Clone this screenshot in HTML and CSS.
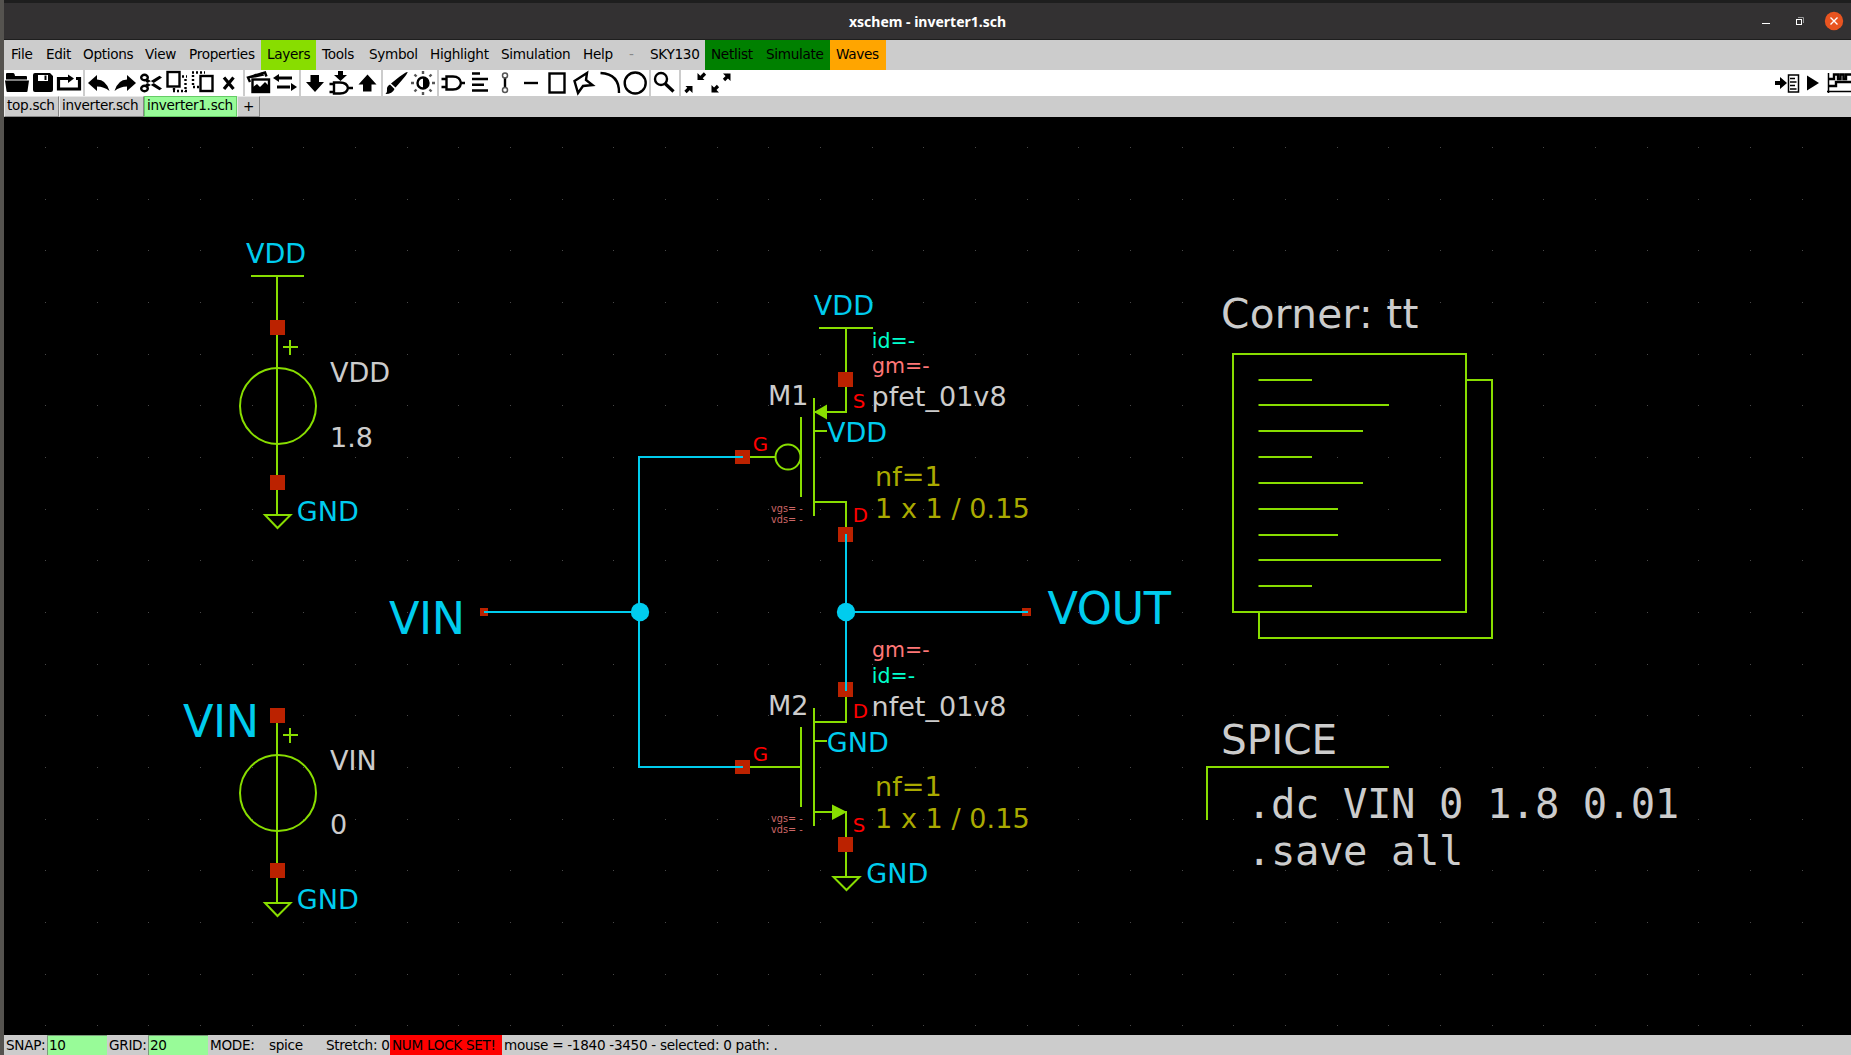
FILE: index.html
```html
<!DOCTYPE html>
<html lang="en">
<head>
<meta charset="utf-8">
<title>xschem - inverter1.sch</title>
<link rel="stylesheet" href="styles.css">
</head>
<body>
<div class="window">
  <header class="titlebar">
    <h1 class="title">xschem - inverter1.sch</h1>
    <svg class="controls" viewBox="1756 3 95 36" width="95" height="36">
      <path d="M1762 23.5h8" stroke="#fff"/>
      <path d="M1798 17.5h5.500v5.500" stroke="#999" fill="none"/>
      <rect x="1796.500" y="19.500" width="5" height="5" fill="none" stroke="#fff"/>
      <circle cx="1834" cy="21" r="9.200" fill="#e95420"/>
      <path d="M1830.500 17.500l7 7m0-7l-7 7" stroke="#fff" stroke-width="1.400"/>
    </svg>
  </header>

  <nav class="menubar">
    <span class="first">File</span><span>Edit</span><span>Options</span><span>View</span><span>Properties</span>
    <span class="layers">Layers</span><span>Tools</span><span>Symbol</span><span>Highlight</span>
    <span>Simulation</span><span>Help</span><span class="dim">-</span><span>SKY130</span>
    <span class="green">Netlist</span><span class="green">Simulate</span><span class="orange">Waves</span>
  </nav>

  <div class="toolbar">
    <div class="group">
      <svg viewBox="4 70 27 26" width="27" height="26"><path d="M6 74q0-1 1-1h6q1 0 1.500 1l.5 2h11q1 0 1 1v2.500H6z"/><path d="M5 80.500h24l-1.500 10.500q0 1-1 1H7.500q-1 0-1-1z"/></svg>
      <svg viewBox="31 70 25 26" width="25" height="26"><path fill-rule="evenodd" d="M35 73h15l3 3v14q0 2-2 2H35q-2 0-2-2V75q0-2 2-2zm3 2v6h10v-6z"/><path d="M44.500 75.500h2v4.500h-2z"/></svg>
      <svg viewBox="56 70 27 26" width="27" height="26"><path d="M66 78.500h-7.500v10.500h21V78.500H76M64 78.500h6" class="ln t3"/><path d="M68 74.500l6 4-6 4.500z"/></svg>
    </div>
    <div class="group">
      <svg viewBox="85 70 26 26" width="26" height="26"><path d="M88 83l9-8v4.500q9 0 12.500 11.500-5.500-4.500-12.500-4.500v4.500z"/></svg>
      <svg viewBox="111 70 27 26" width="27" height="26"><path d="M136 83l-9-8v4.500q-9 0-12.500 11.500 5.500-4.500 12.500-4.500v4.500z"/></svg>
      <svg viewBox="138 70 26 26" width="26" height="26"><g class="ln t2"><ellipse cx="144.500" cy="77.500" rx="3.300" ry="2.700"/><ellipse cx="144.500" cy="88.500" rx="3.300" ry="2.700"/></g><path d="M147 78.500l15 10-2.500 1.700-14-8.500zM147 87.500l15-10-2.500-1.700-14 8.500z"/></svg>
      <svg viewBox="164 70 26 26" width="26" height="26"><rect x="167.500" y="72" width="12" height="14.500" class="ln t2"/><path d="M182 76.500h5M185.500 79v13M173 91h14M174 88v3" class="ln t2 dots"/></svg>
      <svg viewBox="190 70 26 26" width="26" height="26"><rect x="200.500" y="76" width="12" height="15" class="ln t2"/><path d="M192 72.500h13M193 75v12M193 87h6" class="ln t2 dots"/></svg>
      <svg viewBox="216 70 27 26" width="27" height="26"><path d="M224 77.500l9.500 11.500m0-11.500l-9.500 11.500" class="ln t3"/></svg>
    </div>
    <div class="group">
      <svg viewBox="245 70 27 26" width="27" height="26"><rect x="252.500" y="79.500" width="16.500" height="12.500" class="ln t2"/><path d="M253 91v-4l4-3 3 3 5-5 4 4v5z"/><path d="M250 82l-2-4.500 17-5 1.500 4" class="ln t2"/><path d="M248 78l8-4.500 1.500 2 4-3 3 3-9 2z"/></svg>
      <svg viewBox="272 70 27 26" width="27" height="26"><path d="M278 78h14M277 87h13" class="ln t3"/><path d="M273 78l6-4v8zM297 87l-6-4v8z"/></svg>
    </div>
    <div class="group">
      <svg viewBox="301 70 26 26" width="26" height="26"><path d="M310.500 75h8.500v7h5l-9 10-9-10h4.500z"/></svg>
      <svg viewBox="327 70 28 26" width="28" height="26"><path d="M334 82.500h6q7 0 8 5.500-1 5.500-8 5.500h-6z M329.500 84h4.500M329.500 92h4.500M348 88h5" class="ln t2"/><path d="M338 71h5v4h4l-6.500 6-6.500-6h4z"/></svg>
      <svg viewBox="355 70 26 26" width="26" height="26"><path d="M363 91.500h8.500v-7h5l-9-10-9 10h4.500z"/></svg>
    </div>
    <div class="group">
      <svg viewBox="383 70 26 26" width="26" height="26"><path d="M407.500 72q1 1-12 15.500l-4.500-4Q406 71 407.500 72zM390 84.500l4.500 4.500q-2 5-9 5 2-1.500 1.500-4.500t3-5z"/></svg>
      <svg viewBox="409 70 28 26" width="28" height="26"><circle cx="423" cy="83" r="5.500" class="ln t2"/><path d="M423 77.500a5.500 5.500 0 0 1 0 11z"/><path d="M423 71v3m0 18v3M411 83h3m18 0h3M414.500 74.500l2 2m13 13l2 2m0-17l-2 2m-13 13l-2 2" class="ln t2 gray"/></svg>
    </div>
    <div class="group">
      <svg viewBox="439 70 28 26" width="28" height="26"><path d="M446.500 76.500h6.500q7 0 8 6.500-1 6.500-8 6.500h-6.500zM441.500 79h5M441.500 87h5M461 83h4" class="ln t2"/></svg>
      <svg viewBox="467 70 26 26" width="26" height="26"><path d="M472 73.500h8M472 79h16M472 84.700h12M472 90.500h16" class="ln t2"/></svg>
      <svg viewBox="493 70 26 26" width="26" height="26"><path d="M505 77.500v10" class="ln t2"/><g class="ln t1 gray"><circle cx="505" cy="75.500" r="2.500"/><circle cx="505" cy="90" r="2.500"/></g></svg>
      <svg viewBox="519 70 26 26" width="26" height="26"><path d="M524 83h14" class="ln t2"/></svg>
      <svg viewBox="545 70 26 26" width="26" height="26"><rect x="549.500" y="73.500" width="15" height="19" class="ln t2"/></svg>
      <svg viewBox="571 70 26 26" width="26" height="26"><path d="M587 73l-12.500 8 3.500 12 5-7 9.500-1-6.500-5z" class="ln t2"/></svg>
      <svg viewBox="597 70 25 26" width="25" height="26"><path d="M600.500 73q19 1 18.500 20" class="ln t2"/></svg>
      <svg viewBox="622 70 27 26" width="27" height="26"><circle cx="635.200" cy="83" r="10.500" class="ln t2"/></svg>
    </div>
    <div class="group">
      <svg viewBox="651 70 28 26" width="28" height="26"><circle cx="661" cy="79" r="6" class="ln t2"/><path d="M665 83.500l8.500 8" class="ln t3"/></svg>
    </div>
    <div class="group">
      <svg viewBox="681 70 27 26" width="27" height="26"><path d="M685.500 92l4-4M705 73.500l-4 4" class="ln t3"/><path d="M685.500 86h7v7zM704.500 80h-7v-7z"/></svg>
      <svg viewBox="708 70 26 26" width="26" height="26"><path d="M713 91l5-5M729 75l-5 5" class="ln t3"/><path d="M711.500 85v7.500h7.500zM730.500 81v-7.500h-7.500z"/></svg>
    </div>
    <div class="group end">
      <svg viewBox="1773 70 29 26" width="29" height="26"><path d="M1775 81h5v-4l7 6-7 6v-4h-5z"/><rect x="1788.500" y="75" width="10" height="17" class="ln t1"/><path d="M1790 78.500h5M1790 82h6.500M1790 85.500h5M1790 89h6.500" class="ln t1"/></svg>
      <svg viewBox="1802 70 23 26" width="23" height="26"><path d="M1807 75.500l12 7.500-12 7.500z"/></svg>
      <svg viewBox="1825 70 26 26" width="26" height="26"><path d="M1828.500 73v20M1827 91.500h24" class="ln t1"/><path d="M1829 86h7v-4h15M1829 79h5v-4.500h4v4.500h2.500v-4.500h3v4.500h2.500v-4.500h5" class="ln t2"/></svg>
    </div>
  </div>

  <div class="tabs">
    <span class="tab t-top">top.sch</span><span class="tab t-inv">inverter.sch</span><span class="tab t-inv1 active">inverter1.sch</span><span class="tab t-add">+</span>
  </div>

  <svg class="canvas" viewBox="4 117 1847 918" width="1847" height="918">
    <path class="grid" d="M45 147.5H1851M45 199.5H1851M45 250.5H1851M45 302.5H1851M45 354.5H1851M45 405.5H1851M45 457.5H1851M45 509.5H1851M45 560.5H1851M45 612.5H1851M45 664.5H1851M45 715.5H1851M45 767.5H1851M45 819.5H1851M45 870.5H1851M45 922.5H1851M45 974.5H1851M45 1025.5H1851"/>

    <defs>
      <g id="source">
        <path class="sym" d="M277 322V515M283 347H298M290 340V355M265 515H290.500L277.500 528Z"/>
        <path class="pin" d="M270 320h15v15h-15zM270 475h15v15h-15z"/>
      </g>
      <g id="fet">
        <path class="sym" d="M814 398V516M801 417V497M814 431H827M847 412H814M846 372V413M814 502H847M846 501V530"/>
        <path class="pin" d="M838 372h15v15h-15zM735 450h15v14h-15zM838 527h15v15h-15z"/>
      </g>
    </defs>

    <use href="#source"/>
    <use href="#source" y="388"/>
    <circle class="sym" cx="278" cy="406" r="38"/>
    <circle class="sym" cx="278" cy="793" r="38"/>
    <path class="sym" d="M251 276H304M277 276V320"/>

    <path class="sym" d="M819 328H873M846 328V374M750 457H775"/>
    <circle class="sym" cx="788" cy="457" r="12.500"/>
    <use href="#fet"/>
    <path class="solid" d="M814 412L827 404.500V419.500Z"/>

    <path class="sym" d="M750 767H801M846 850V877M833.500 877H859.500L846.500 890Z"/>
    <use href="#fet" y="310"/>
    <path class="solid" d="M847 812L832 804.500V820Z"/>

    <path class="pin" d="M480 608h8v8h-8zM1022 608h9v8h-9z"/>
    <path class="wire" d="M484 612H639M743 457H639V767H743M846 534V691M846 612H1028"/>
    <circle class="node" cx="640" cy="612" r="9.200"/>
    <circle class="node" cx="846" cy="612" r="9.200"/>

    <path class="sym" d="M1233 354H1466V612H1233ZM1466 380H1492V638H1259V612M1258.500 380H1312M1258.500 405H1389M1258.500 431H1363M1258.500 457H1312M1258.500 483H1363M1258.500 509H1338M1258.500 535H1338M1258.500 560H1441M1258.500 586H1312M1389 767H1207V820"/>

    <g class="net">
      <text x="246" y="263">VDD</text>
      <text x="296.800" y="520.500">GND</text>
      <text x="296.800" y="908.500">GND</text>
      <text x="813.800" y="314.500">VDD</text>
      <text x="827" y="441.500">VDD</text>
      <text x="826.800" y="751.500">GND</text>
      <text x="866.300" y="882.500">GND</text>
      <text class="big" x="389" y="633.500">VIN</text>
      <text class="big" x="183" y="736.500">VIN</text>
      <text class="big" x="1047.500" y="624">VOUT</text>
    </g>
    <g class="label">
      <text x="330" y="382">VDD</text>
      <text x="330" y="447">1.8</text>
      <text x="330" y="770">VIN</text>
      <text x="330" y="833.500">0</text>
      <text x="768" y="404.700">M1</text>
      <text x="768" y="714.700">M2</text>
      <text x="871.500" y="405.500">pfet_01v8</text>
      <text x="871.500" y="715.500">nfet_01v8</text>
      <text class="head wide" x="1221" y="328">Corner: tt</text>
      <text class="head" x="1221" y="753.700">SPICE</text>
      <text class="code" x="1247" y="817.700">.dc VIN 0 1.8 0.01</text>
      <text class="code" x="1247" y="864.700">.save all</text>
    </g>
    <g class="size">
      <text x="875" y="486">nf=1</text>
      <text x="875" y="517.700">1 x 1 / 0.15</text>
      <text x="875" y="796">nf=1</text>
      <text x="875" y="827.700">1 x 1 / 0.15</text>
    </g>
    <g class="pname">
      <text x="852.800" y="407.800">S</text>
      <text x="752.800" y="451">G</text>
      <text x="852.800" y="522">D</text>
      <text x="852.800" y="718">D</text>
      <text x="752.800" y="761">G</text>
      <text x="852.800" y="832">S</text>
    </g>
    <g class="param">
      <text class="id" x="871.800" y="347.500">id=-</text>
      <text class="gm" x="872" y="373.300">gm=-</text>
      <text class="gm" x="872" y="657.300">gm=-</text>
      <text class="id" x="871.800" y="683">id=-</text>
    </g>
    <g class="volts">
      <text x="771" y="512.300">vgs= -</text>
      <text x="771" y="523">vds= -</text>
      <text x="771" y="822.300">vgs= -</text>
      <text x="771" y="833">vds= -</text>
    </g>
  </svg>

  <footer class="status">
    <span class="s-snap">SNAP:</span><span class="entry">10</span>
    <span class="s-grid">GRID:</span><span class="entry">20</span>
    <span class="s-mode">MODE:</span><span class="s-type">spice</span><span class="s-stretch">Stretch: 0</span>
    <span class="lock">NUM LOCK SET!</span><span class="s-mouse">mouse = -1840 -3450 - selected: 0 path: .</span>
  </footer>
</div>
</body>
</html>
```
FILE: styles.css
```css
* { box-sizing: border-box; }

body {
  margin: 0;
  background: #000;
  font: 13.6px "DejaVu Sans", sans-serif;
  color: #000;
  overflow: hidden;
}

.window {
  display: flex;
  flex-direction: column;
  width: 1851px;
  height: 1055px;
  border-left: 4px solid #55534f;
}

.titlebar {
  display: grid;
  grid-template-columns: 95px 1fr 95px;
  align-items: center;
  height: 40px;
  border-top: 3px solid #1e1e1e;
  border-bottom: 1px solid #1e1e1e;
  background: #333132;
}

.title {
  grid-column: 2;
  margin: 0;
  text-align: center;
  color: #fff;
  font: bold 14px "Noto Sans", sans-serif;
  white-space: pre;
}

.menubar, .tabs, .status { letter-spacing: -0.3px; }

.menubar {
  display: grid;
  grid-template-columns: 36px 37px 62px 44px 78px 55px 47px 61px 71px 82px 46px 21px 61px 55px 70px 56px;
  height: 30px;
  background: #ccc;
  line-height: 28px;
}

.menubar span { padding-left: 6px; white-space: nowrap; }
.menubar .first { padding-left: 7px; }
.menubar .layers { background: #8d0; }
.menubar .green { background: #008000; }
.menubar .orange { background: #ffa500; }
.menubar .dim { color: #888; }

.toolbar {
  display: flex;
  gap: 2px;
  height: 26px;
  background: #ccc;
}

.group { display: flex; background: #fff; }
.group svg { display: block; }
.group:nth-last-child(2) { flex: 1; }
.group.end { margin-left: -2px; }

.ln { fill: none; stroke: #000; }
.t1 { stroke-width: 1.5; }
.t2 { stroke-width: 2.4; }
.t3 { stroke-width: 3.2; }
.gray { stroke: #555; }
.dots { stroke-dasharray: 2 2; }

.tabs {
  display: flex;
  height: 21px;
  background: #ccc;
}

.tab {
  height: 21px;
  padding-left: 2px;
  border: 1px solid;
  border-color: #e8e8e8 #888 #888 #e8e8e8;
  line-height: 16px;
  white-space: nowrap;
}

.t-top { width: 55px; }
.t-inv { width: 85px; }
.t-inv1 { width: 93px; }
.t-add { width: 23px; padding-left: 5px; line-height: 18px; }
.active { background: #98fb98; border-color: #6c6; }

.canvas { display: block; background: #000; }

.grid {
  stroke: #484848;
  stroke-width: 1;
  stroke-dasharray: 1 50.67;
  shape-rendering: crispEdges;
}

.sym { fill: none; stroke: #8d0; stroke-width: 2; }
.wire { fill: none; stroke: #00ccee; stroke-width: 2; }
.solid { fill: #8d0; }
.node { fill: #00ccee; }
.pin { fill: #bb2200; }

.canvas text { white-space: pre; font-size: 27.05px; }
.net { fill: #00ccee; }
.label { fill: #ccc; }
.size { fill: #aaaa00; letter-spacing: 0.05px; }
.pname { fill: #f00; }
.id { fill: #00ffcc; }
.gm { fill: #ff7777; }
.volts { fill: #cc6666; }
.canvas .big { font-size: 44.6px; letter-spacing: -0.4px; }
.canvas .head { font-size: 40.6px; }
.canvas .wide { letter-spacing: 0.35px; }
.canvas .code {
  font-family: "DejaVu Sans Mono", monospace;
  font-size: 40.6px;
  letter-spacing: -0.44px;
}
.canvas .pname text { font-size: 19.8px; }
.canvas .param text { font-size: 20.5px; }
.canvas .volts text { font-size: 9.7px; }

.status {
  display: flex;
  height: 20px;
  background: #ccc;
  line-height: 21px;
  white-space: pre;
}

.status span { flex: none; }
.entry {
  width: 60px;
  padding-left: 1px;
  background: #98fb98;
  border: 1px solid #7c9c7c;
  border-width: 1px 0 0 1px;
  line-height: 19px;
}
.s-snap { width: 43px; padding-left: 2px; }
.s-grid { width: 41px; padding-left: 2px; }
.s-mode { width: 61px; padding-left: 2px; }
.s-type { width: 57px; }
.s-stretch { width: 64px; }
.lock { width: 112px; padding-left: 2px; background: #f00; }
.s-mouse { padding-left: 2px; }
```
